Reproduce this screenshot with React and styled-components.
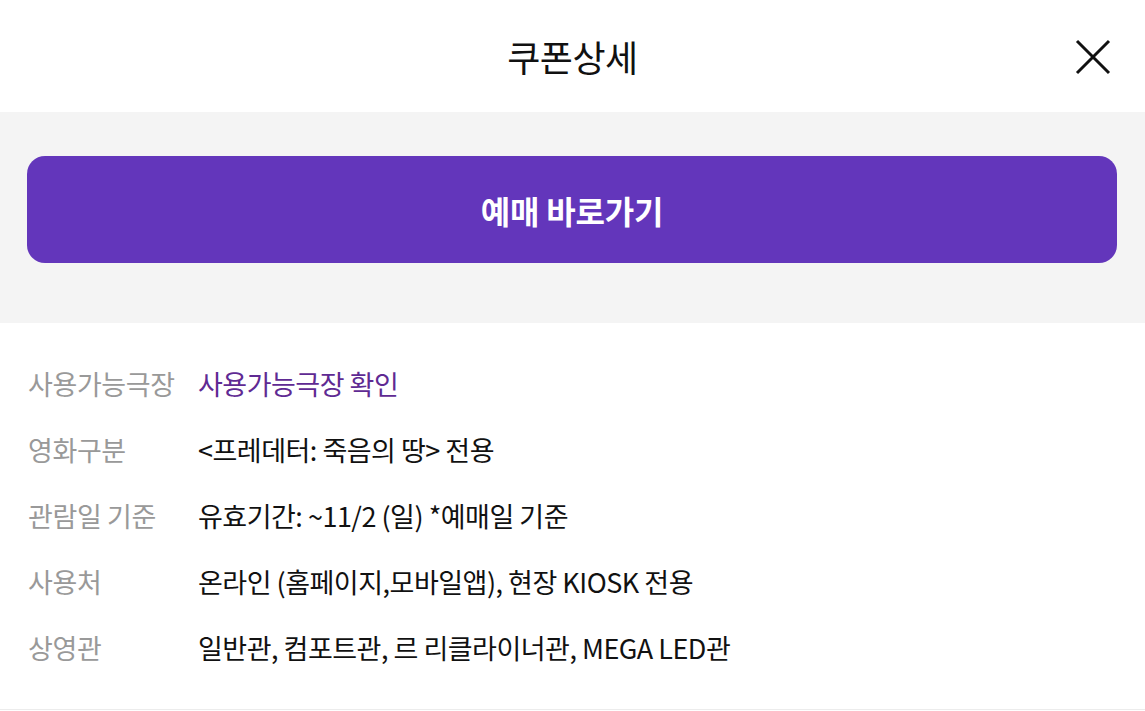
import React from "react";
import styled, { createGlobalStyle } from "styled-components";

const Global = createGlobalStyle`
  html, body { margin: 0; padding: 0; background: #fff; }
  body { font-family: "Noto Sans CJK KR", "Noto Sans", sans-serif; }
  * { box-sizing: border-box; }
`;

const Page = styled.div`
  width: 1145px;
  height: 711px;
  display: flex;
  flex-direction: column;
  background: #fff;
  overflow: hidden;
`;

const Header = styled.header`
  position: relative;
  height: 112px;
  display: flex;
  align-items: center;
  justify-content: center;
`;

const Title = styled.h1`
  margin: 0;
  font-size: 36px;
  font-weight: 400;
  color: #111;
  letter-spacing: -0.5px;
`;

const CloseButton = styled.button`
  position: absolute;
  right: 33px;
  top: 38px;
  width: 38px;
  height: 38px;
  padding: 0;
  border: 0;
  background: none;
  display: flex;
  align-items: center;
  justify-content: center;
`;

const ActionBand = styled.section`
  background: #f4f4f4;
  padding: 44px 28px 60px 27px;
`;

const PrimaryButton = styled.button`
  width: 100%;
  height: 107px;
  border: 0;
  border-radius: 18px;
  background: #6336bb;
  color: #fff;
  font-family: inherit;
  font-size: 32px;
  font-weight: 700;
  letter-spacing: -0.2px;
  display: flex;
  align-items: center;
  justify-content: center;
`;

const InfoList = styled.dl`
  margin: 0;
  padding: 27px 28px 29px;
  border-bottom: 1px solid #ececec;
`;

const InfoRow = styled.div`
  display: flex;
  align-items: center;
  height: 66px;
`;

const Label = styled.dt`
  width: 170px;
  font-size: 27px;
  color: #999;
  letter-spacing: -0.4px;
`;

const Value = styled.dd`
  margin: 0;
  font-size: 27px;
  letter-spacing: -0.5px;
  color: ${(p) => (p.$link ? "#5f2a93" : "#111")};
`;

const rows = [
  ["사용가능극장", "사용가능극장 확인", true],
  ["영화구분", "<프레데터: 죽음의 땅> 전용"],
  ["관람일 기준", "유효기간: ~11/2 (일) *예매일 기준"],
  ["사용처", "온라인 (홈페이지,모바일앱), 현장 KIOSK 전용"],
  ["상영관", "일반관, 컴포트관, 르 리클라이너관, MEGA LED관"],
];

export default function App() {
  return (
    <Page>
      <Global />
      <Header>
        <Title>쿠폰상세</Title>
        <CloseButton aria-label="닫기">
          <svg width="36" height="36" viewBox="0 0 36 36">
            <path d="M2 2 L34 34 M34 2 L2 34" stroke="#111" strokeWidth="3" fill="none" />
          </svg>
        </CloseButton>
      </Header>
      <ActionBand>
        <PrimaryButton>예매 바로가기</PrimaryButton>
      </ActionBand>
      <InfoList>
        {rows.map(([label, value, link]) => (
          <InfoRow key={label}>
            <Label>{label}</Label>
            <Value $link={link}>{value}</Value>
          </InfoRow>
        ))}
      </InfoList>
    </Page>
  );
}
